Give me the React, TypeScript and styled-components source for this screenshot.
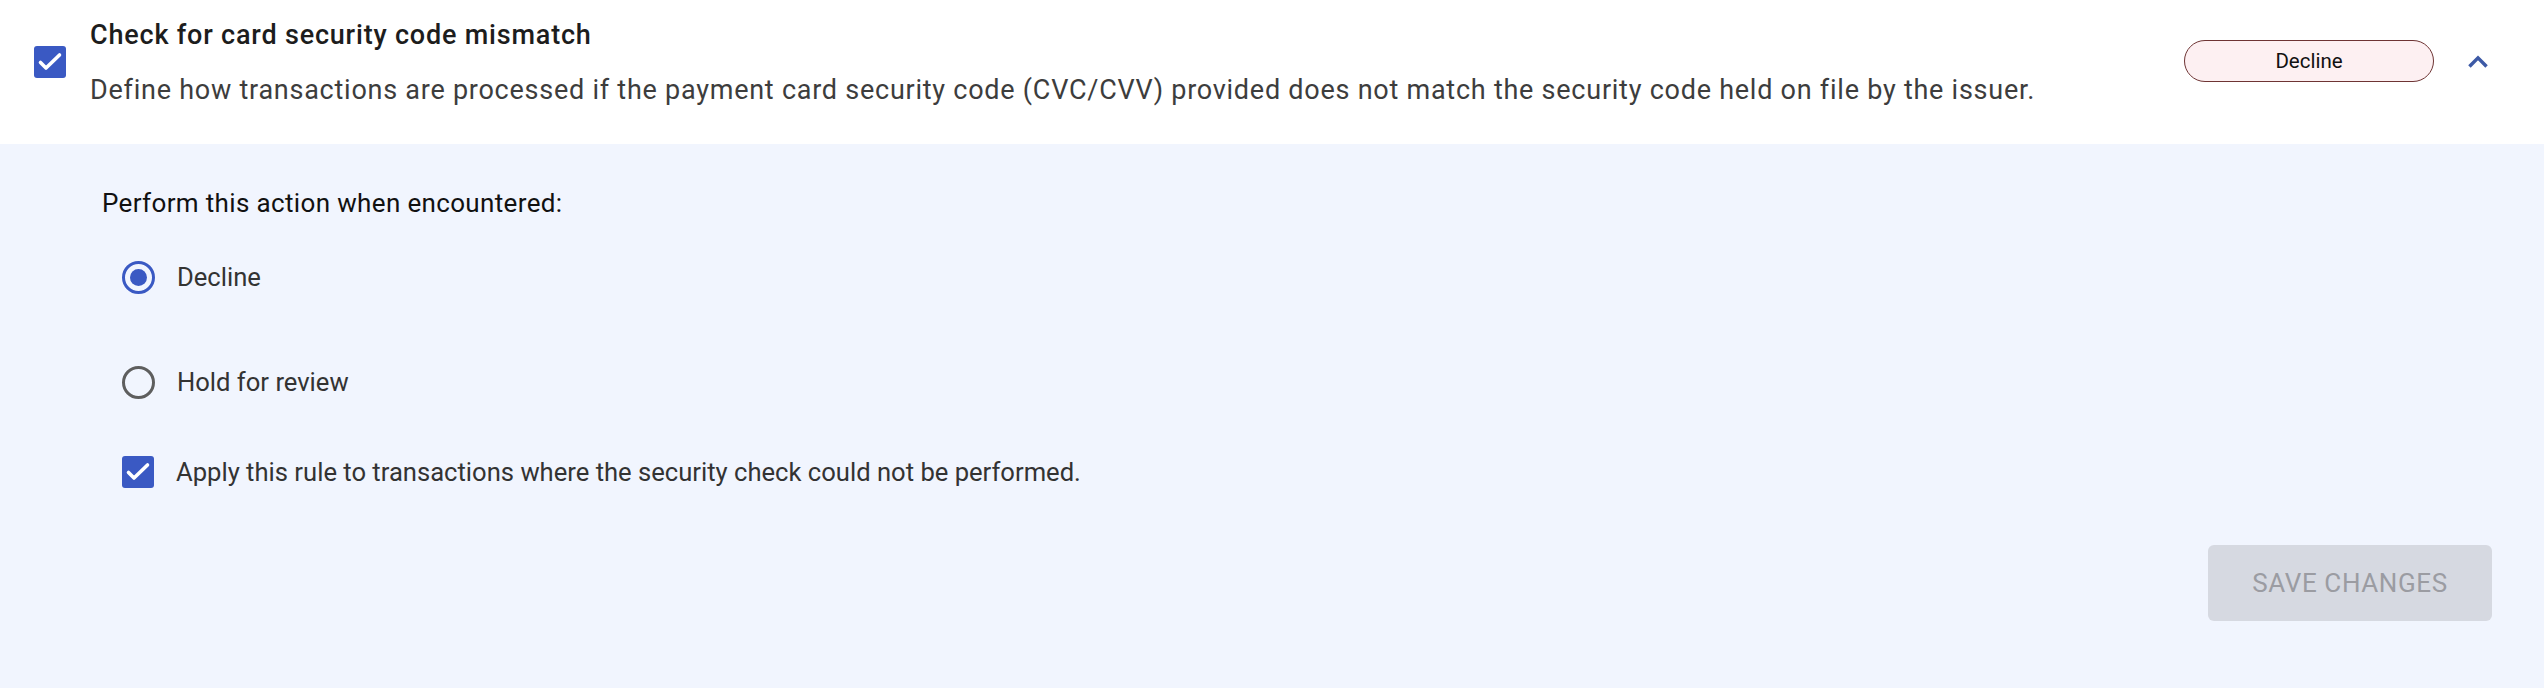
import React from "react";
import styled, { createGlobalStyle } from "styled-components";

const Global = createGlobalStyle`
  html, body { margin: 0; padding: 0; }
  body { font-family: Roboto, "Liberation Sans", sans-serif; background: #f1f5fe; }
  * { box-sizing: border-box; }
`;

const Page = styled.div`
  display: flex;
  flex-direction: column;
  min-height: 100vh;
  width: 100%;
`;

const Header = styled.div`
  display: flex;
  align-items: center;
  background: #ffffff;
  padding: 15px 47px 35px 34px;
  height: 144px;
`;

const CheckBox = styled.span`
  flex: 0 0 auto;
  width: 32px;
  height: 32px;
  border-radius: 3px;
  background: #3a59c3;
  display: inline-flex;
  align-items: center;
  justify-content: center;
`;

const HeaderText = styled.div`
  flex: 1;
  display: flex;
  flex-direction: column;
  gap: 17px;
  margin-left: 24px;
`;

const Title = styled.div`
  font-size: 27px;
  line-height: 38px;
  font-weight: 500;
  letter-spacing: 0.8px;
  color: #1d1d1d;
`;

const Description = styled.div`
  font-size: 27px;
  line-height: 38px;
  font-weight: 400;
  letter-spacing: 0.75px;
  color: #3d3d3d;
`;

const Badge = styled.div`
  width: 250px;
  height: 42px;
  border: 1.5px solid #6e3434;
  border-radius: 21px;
  background: #fdf0f2;
  display: flex;
  align-items: center;
  justify-content: center;
  font-size: 20.5px;
  color: #111;
  margin-top: -3px;
`;

const ChevronButton = styled.span`
  width: 38px;
  height: 38px;
  margin-left: 25px;
  display: inline-flex;
  align-items: center;
  justify-content: center;
`;

const Panel = styled.div`
  flex: 1;
  background: #f1f5fe;
  padding: 40px 52px 40px 102px;
  display: flex;
  flex-direction: column;
`;

const Prompt = styled.div`
  font-size: 26px;
  line-height: 38px;
  letter-spacing: 0.35px;
  color: #111;
`;

const OptionRow = styled.label<{ $gap: number }>`
  display: flex;
  align-items: center;
  height: 38px;
  margin-top: ${(p) => p.$gap}px;
  padding-left: 20px;
`;

const RadioRing = styled.span<{ $checked?: boolean }>`
  width: 33px;
  height: 33px;
  border-radius: 50%;
  border: 3.5px solid ${(p) => (p.$checked ? "#3a59c3" : "#5e5e5e")};
  display: inline-flex;
  align-items: center;
  justify-content: center;
  flex: 0 0 auto;
  &::after {
    content: "";
    display: ${(p) => (p.$checked ? "block" : "none")};
    width: 17px;
    height: 17px;
    border-radius: 50%;
    background: #3a59c3;
  }
`;

const OptionLabel = styled.span`
  margin-left: 22px;
  font-size: 25.6px;
  color: #333;
`;

const Footer = styled.div`
  display: flex;
  justify-content: flex-end;
  margin-top: 54px;
`;

const SaveButton = styled.button`
  width: 284px;
  height: 76px;
  border: none;
  border-radius: 6px;
  background: #d6d9e1;
  color: #9b9ca2;
  font-family: Roboto, "Liberation Sans", sans-serif;
  font-size: 26px;
  font-weight: 400;
  letter-spacing: 0.6px;
  text-transform: uppercase;
`;

const Check = () => (
  <svg width="32" height="32" viewBox="0 0 32 32">
    <path d="M6.5 16.5l5.5 5.5L25.5 9" fill="none" stroke="#fff" strokeWidth="3.6" strokeLinecap="round" strokeLinejoin="round" />
  </svg>
);

export default function App() {
  return (
    <Page>
      <Global />
      <Header>
        <CheckBox>
          <Check />
        </CheckBox>
        <HeaderText>
          <Title>Check for card security code mismatch</Title>
          <Description>
            Define how transactions are processed if the payment card security code (CVC/CVV) provided does not match the security code held on file by the issuer.
          </Description>
        </HeaderText>
        <Badge>Decline</Badge>
        <ChevronButton>
          <svg width="38" height="38" viewBox="0 0 24 24">
            <path d="M6.6 14.8L12 9.4l5.4 5.4" fill="none" stroke="#3d5aa6" strokeWidth="2.2" />
          </svg>
        </ChevronButton>
      </Header>
      <Panel>
        <Prompt>Perform this action when encountered:</Prompt>
        <OptionRow $gap={36}>
          <RadioRing $checked />
          <OptionLabel>Decline</OptionLabel>
        </OptionRow>
        <OptionRow $gap={67}>
          <RadioRing />
          <OptionLabel>Hold for review</OptionLabel>
        </OptionRow>
        <OptionRow $gap={52}>
          <CheckBox>
            <Check />
          </CheckBox>
          <OptionLabel>Apply this rule to transactions where the security check could not be performed.</OptionLabel>
        </OptionRow>
        <Footer>
          <SaveButton disabled>Save changes</SaveButton>
        </Footer>
      </Panel>
    </Page>
  );
}
